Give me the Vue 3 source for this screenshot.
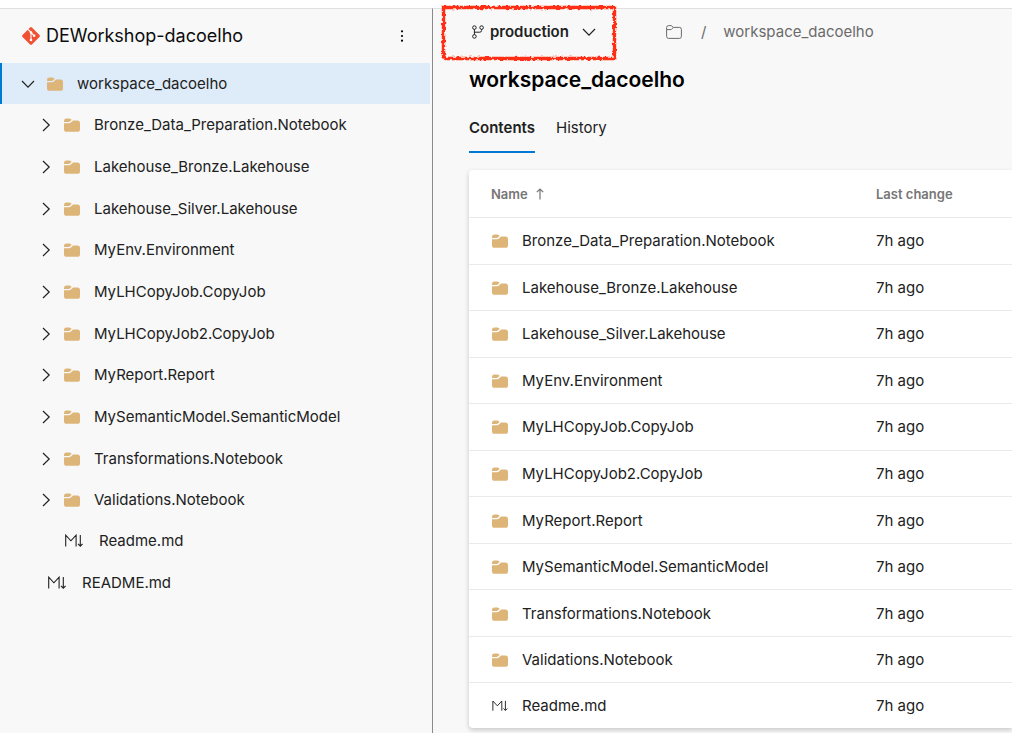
<script setup>
import { ref } from 'vue'

const folders = [
  'Bronze_Data_Preparation.Notebook',
  'Lakehouse_Bronze.Lakehouse',
  'Lakehouse_Silver.Lakehouse',
  'MyEnv.Environment',
  'MyLHCopyJob.CopyJob',
  'MyLHCopyJob2.CopyJob',
  'MyReport.Report',
  'MySemanticModel.SemanticModel',
  'Transformations.Notebook',
  'Validations.Notebook',
]
const rows = [
  ...folders.map((name) => ({ name, kind: 'folder' })),
  { name: 'Readme.md', kind: 'markdown' },
]
const tab = ref('Contents')
</script>

<template>
  <svg class="defs" aria-hidden="true">
    <symbol id="folder" viewBox="0 0 16 14">
      <path d="M0 3.9V2.9Q0 .5 2.4 .5H5Q6.3 .5 7.1 1.3L7.6 1.8 6.2 3.2Q5.5 3.9 4.5 3.9Z" />
      <path d="M0 5.2H4.8Q6.2 5.2 7.2 4.2L9 2.4H13.4Q16 2.4 16 5V11.2Q16 13.8 13.4 13.8H2.6Q0 13.8 0 11.2Z" />
    </symbol>
    <symbol id="chevron-down" viewBox="0 0 14 14">
      <path d="M1 4 7 10.2 13 4" fill="none" stroke="currentColor" stroke-width="1.2" />
    </symbol>
    <symbol id="chevron-right" viewBox="0 0 14 14">
      <path d="M4 1 10.2 7 4 13" fill="none" stroke="currentColor" stroke-width="1.2" />
    </symbol>
    <symbol id="markdown" viewBox="0 0 18 14">
      <path d="M.7 12.5V1.2L5.9 6.8 11.1 1.2V12.5M15.3 1V12M13 9.9 15.3 12.2 17.6 9.9" fill="none" stroke="currentColor" stroke-width="1.1" />
    </symbol>
  </svg>
  <div class="page">
    <aside class="sidebar">
      <header class="repo">
        <svg class="git" viewBox="0 0 18 18" aria-hidden="true">
          <path d="M8.1.5Q9 -.3 9.9.5L17.5 8.1Q18.3 9 17.5 9.9L9.9 17.5Q9 18.3 8.1 17.5L.5 9.9Q-.3 9 .5 8.1Z" fill="#f05033" />
          <path d="M6.2 2.5 9 5.3V13M9 5.5 12 8.7" fill="none" stroke="#fff" stroke-width="1.1" />
          <circle cx="9" cy="5.5" r="1.3" fill="#fff" />
          <circle cx="9" cy="13" r="1.3" fill="#fff" />
          <circle cx="12.1" cy="8.8" r="1.3" fill="#fff" />
        </svg>
        <span class="repo-name">DEWorkshop-dacoelho</span>
        <button class="more" aria-label="More actions">
          <svg viewBox="0 0 4 14" aria-hidden="true">
            <circle cx="2" cy="2.3" r="1.1" /><circle cx="2" cy="7" r="1.1" /><circle cx="2" cy="11.7" r="1.1" />
          </svg>
        </button>
      </header>
      <nav class="tree" aria-label="Files">
        <button class="node selected" aria-expanded="true">
          <svg class="chev"><use href="#chevron-down" /></svg>
          <svg class="folder"><use href="#folder" /></svg>
          <span>workspace_dacoelho</span>
        </button>
        <button v-for="name in folders" :key="name" class="node child" aria-expanded="false">
          <svg class="chev"><use href="#chevron-right" /></svg>
          <svg class="folder"><use href="#folder" /></svg>
          <span>{{ name }}</span>
        </button>
        <button class="node file nested">
          <svg class="md"><use href="#markdown" /></svg>
          <span>Readme.md</span>
        </button>
        <button class="node file">
          <svg class="md"><use href="#markdown" /></svg>
          <span>README.md</span>
        </button>
      </nav>
    </aside>

    <main class="content">
      <div class="bar">
        <button class="branch">
          <svg class="branch-icon" viewBox="0 0 12 14" aria-hidden="true">
            <g fill="none" stroke="currentColor" stroke-width="1">
              <circle cx="2.4" cy="2.6" r="1.8" /><circle cx="9.6" cy="2.6" r="1.8" /><circle cx="2.4" cy="11.4" r="1.8" />
              <path d="M2.4 4.4V9.6M9.6 4.4V5.4Q9.6 7.2 7.8 7.2H2.4" />
            </g>
          </svg>
          <span>production</span>
          <svg class="chev"><use href="#chevron-down" /></svg>
          <svg class="marker" viewBox="0 0 176 56" aria-hidden="true">
            <filter id="rough" x="-5%" y="-10%" width="110%" height="120%">
              <feTurbulence type="fractalNoise" baseFrequency="0.35" numOctaves="2" seed="4" />
              <feDisplacementMap in="SourceGraphic" scale="4" xChannelSelector="R" yChannelSelector="G" />
            </filter>
            <path d="M2.5 2.5H173.5V53.5H4.5L2.5 51Z" fill="none" stroke="#ff2f12" stroke-width="3.4" filter="url(#rough)" />
          </svg>
        </button>
        <nav class="crumbs" aria-label="Breadcrumb">
          <a href="#" aria-label="Root folder">
            <svg class="outline" viewBox="0 0 16 14" aria-hidden="true">
              <path d="M.6 4.6V2.6Q.6.6 2.6.6H5.2L7.4 2.4H13.4Q15.4 2.4 15.4 4.4V11.4Q15.4 13.4 13.4 13.4H2.6Q.6 13.4.6 11.4V4.6H5.2L7.4 2.4" fill="none" stroke="currentColor" />
            </svg>
          </a>
          <span class="slash">/</span>
          <a href="#">workspace_dacoelho</a>
        </nav>
      </div>
      <h1>workspace_dacoelho</h1>
      <div class="tabs" role="tablist">
        <button v-for="t in ['Contents', 'History']" :key="t" role="tab" class="tab" :class="{ active: tab === t }" :aria-selected="tab === t" @click="tab = t">{{ t }}</button>
      </div>
      <table class="files">
        <thead>
          <tr>
            <th scope="col" class="name">
              <span class="cell">Name
                <svg class="arrow" viewBox="0 0 8 12" aria-hidden="true"><path d="M4 11.5V1M.8 4.2 4 1 7.2 4.2" fill="none" stroke="currentColor" stroke-width="1.2" /></svg>
              </span>
            </th>
            <th scope="col">Last change</th>
          </tr>
        </thead>
        <tbody>
          <tr v-for="row in rows" :key="row.name">
            <td class="name">
              <span class="cell">
                <svg v-if="row.kind === 'folder'" class="folder"><use href="#folder" /></svg>
                <svg v-else class="md"><use href="#markdown" /></svg>
                <a href="#">{{ row.name }}</a>
              </span>
            </td>
            <td>7h ago</td>
          </tr>
        </tbody>
      </table>
    </main>
  </div>
</template>

<style>
body {
  margin: 0;
  background: #fff;
}
</style>

<style scoped>
.defs {
  position: absolute;
  width: 0;
  height: 0;
}
.page {
  box-sizing: border-box;
  min-height: 100vh;
  padding-top: 8px;
  display: flex;
  overflow: hidden;
  font-family: Inter, "Liberation Sans", sans-serif;
  font-size: 15px;
  line-height: 20px;
  color: #212121;
}
button {
  border: 0;
  padding: 0;
  margin: 0;
  background: none;
  font: inherit;
  color: inherit;
  text-align: left;
}
a {
  color: inherit;
  text-decoration: none;
}
svg {
  flex: none;
  display: block;
}
.sidebar {
  flex: none;
  box-sizing: border-box;
  width: 433px;
  padding-right: 2px;
  border-top: 1px solid #e0e0e0;
  border-right: 1px solid #8a8a8a;
  background: #f8f8f8;
}
.repo {
  height: 54px;
  display: flex;
  align-items: center;
  padding: 0 20px 0 22px;
}
.git {
  width: 18px;
  height: 18px;
}
.repo-name {
  flex: 1;
  margin-left: 6px;
  font-size: 18px;
  color: #0c0c0c;
}
.more {
  width: 16px;
  height: 24px;
  display: grid;
  place-items: center;
}
.more svg {
  width: 4px;
  height: 14px;
}
.tree {
  min-height: 541px;
  display: grid;
  grid-template-rows: 41px;
  grid-auto-rows: 1fr;
}
.node {
  display: flex;
  align-items: center;
  padding-left: 21px;
}
.node.selected {
  padding-left: 19px;
  border-left: 2px solid #0078d4;
  background: #deebf8;
}
.node.child {
  padding-top: 1px;
  padding-left: 39px;
}
.chev {
  width: 14px;
  height: 14px;
}
.folder {
  width: 16px;
  height: 14px;
  fill: #deb578;
}
.md {
  width: 18px;
  height: 14px;
}
.node .folder {
  margin: 0 14px 0 11px;
}
.node.selected .folder {
  margin-left: 12px;
}
.node.file {
  padding-left: 48px;
  gap: 16px;
}
.node.file.nested {
  padding-left: 65px;
}
.content {
  flex: 1;
  min-width: 0;
  padding-left: 36px;
  border-top: 1px solid #e0e0e0;
  background: #f8f8f8;
}
.bar {
  height: 46px;
  display: flex;
  align-items: center;
}
.branch {
  position: relative;
  display: flex;
  align-items: center;
  padding-left: 3px;
  font-weight: 600;
}
.branch span {
  margin: 0 13px 0 6px;
}
.branch-icon {
  width: 12px;
  height: 14px;
}
.marker {
  position: absolute;
  left: -28px;
  top: -17px;
  width: 176px;
  height: 56px;
}
.crumbs {
  display: flex;
  align-items: center;
  margin-left: 70px;
  color: #6b6b6b;
}
.outline {
  width: 16px;
  height: 14px;
}
.slash {
  margin: 0 17px 0 19px;
}
h1 {
  margin: 10px 0 0;
  font-size: 21px;
  line-height: 30px;
  font-weight: 600;
  color: #000;
}
.tabs {
  display: flex;
  gap: 21px;
  margin-top: 12px;
}
.tab {
  height: 46px;
  padding-bottom: 2px;
  border-bottom: 2px solid transparent;
}
.tab.active {
  font-weight: 600;
  border-color: #0078d4;
}
.files {
  width: 100%;
  height: 558px;
  margin-top: 17px;
  border-collapse: separate;
  border-spacing: 0;
  background: #fff;
  border-radius: 4px 0 0 4px;
  box-shadow: 0 2px 5px rgba(0, 0, 0, 0.2);
}
th,
td {
  padding: 0;
  text-align: left;
  vertical-align: middle;
  border-bottom: 1px solid #eaeaea;
}
td {
  padding-top: 1px;
}
tr:last-child td {
  border-bottom: 0;
}
thead th {
  height: 47px;
  border-bottom: 1px solid #eaeaea;
  font-size: 13px;
  font-weight: 600;
  color: #767676;
}
.name {
  width: 385px;
  padding-left: 22px;
}
.cell {
  display: flex;
  align-items: center;
}
.arrow {
  width: 8px;
  height: 12px;
  margin-left: 8px;
}
td .folder {
  margin: 0 14px 0 1px;
}
td .md {
  width: 16px;
  height: 12px;
  margin: 0 14px 0 1px;
}
</style>
